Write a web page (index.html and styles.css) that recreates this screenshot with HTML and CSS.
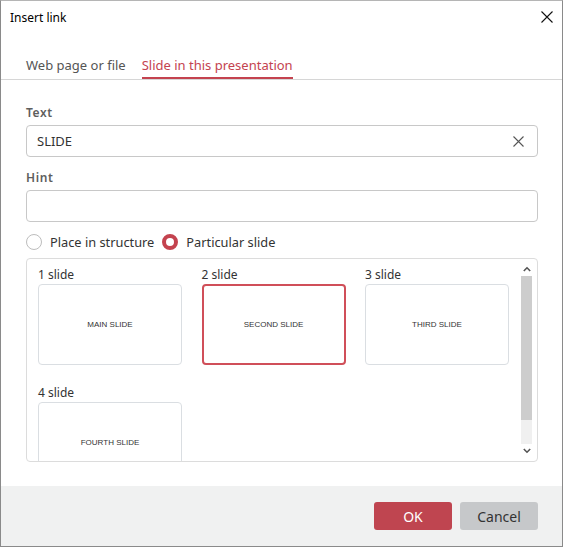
FILE: index.html
```html
<!DOCTYPE html>
<html>
<head>
<meta charset="utf-8">
<link rel="stylesheet" href="styles.css">
</head>
<body>
<div class="dialog">
  <div class="titlebar">
    <span class="title">Insert link</span>
    <button class="close" aria-label="Close">
      <svg width="12" height="12" viewBox="0 0 12 12"><path d="M0.5 0.5L11.5 11.5M11.5 0.5L0.5 11.5" stroke="#111" stroke-width="1.1" fill="none"/></svg>
    </button>
  </div>
  <div class="tabs">
    <div class="tab">Web page or file</div>
    <div class="tab active">Slide in this presentation</div>
  </div>
  <div class="content">
    <div class="label">Text</div>
    <div class="input">
      <span class="value">SLIDE</span>
      <svg class="clear" width="11" height="11" viewBox="0 0 11 11"><path d="M0.5 0.5L10.5 10.5M10.5 0.5L0.5 10.5" stroke="#555" stroke-width="1.1" fill="none"/></svg>
    </div>
    <div class="label hint">Hint</div>
    <div class="input"></div>
    <div class="radios">
      <label class="radio"><span class="dot"></span>Place in structure</label>
      <label class="radio checked"><span class="dot"></span>Particular slide</label>
    </div>
    <div class="listbox">
      <div class="grid">
        <div class="slide"><div class="slide-name">1 slide</div><div class="card">MAIN SLIDE</div></div>
        <div class="slide"><div class="slide-name">2 slide</div><div class="card selected">SECOND SLIDE</div></div>
        <div class="slide"><div class="slide-name">3 slide</div><div class="card">THIRD SLIDE</div></div>
        <div class="slide"><div class="slide-name">4 slide</div><div class="card">FOURTH SLIDE</div></div>
      </div>
      <div class="scrollbar">
        <div class="arrow up"><svg width="8" height="6" viewBox="0 0 8 6"><path d="M0.8 5L4 1.8L7.2 5" stroke="#555" stroke-width="1.6" fill="none"/></svg></div>
        <div class="track"><div class="thumb"></div></div>
        <div class="arrow down"><svg width="8" height="6" viewBox="0 0 8 6"><path d="M0.8 1L4 4.2L7.2 1" stroke="#555" stroke-width="1.6" fill="none"/></svg></div>
      </div>
    </div>
  </div>
  <div class="footer">
    <button class="btn ok">OK</button>
    <button class="btn cancel">Cancel</button>
  </div>
</div>
</body>
</html>
```
FILE: styles.css
```css
* { box-sizing: border-box; }
html, body { margin: 0; padding: 0; background: #fff; }
body { font-family: "Noto Sans", "Open Sans", sans-serif; color: #333; }

.dialog {
  width: 563px;
  height: 547px;
  border: 1px solid #8a8a8a;
  border-top-color: #b5b5b5;
  display: flex;
  flex-direction: column;
  background: #fff;
}

.titlebar {
  height: 32px;
  display: flex;
  align-items: center;
  justify-content: space-between;
  padding: 0 9px 0 9px;
}
.title { font-size: 12px; color: #000; }
.close {
  border: 0; background: none; padding: 0; width: 12px; height: 12px;
  display: flex;
}

.tabs {
  display: flex;
  gap: 16px;
  padding: 23px 0 0 25px;
  border-bottom: 1px solid #d6d6d6;
}
.tab {
  font-size: 13px;
  line-height: 18px;
  padding-bottom: 3px;
  border-bottom: 2px solid transparent;
  color: #555;
}
.tab.active { color: #c4434f; border-bottom-color: #c4434f; }

.content { padding: 25px 24px 0 25px; }

.label {
  font-size: 12px;
  font-weight: 600;
  line-height: 16px;
  color: #5e5e5e;
  letter-spacing: 0.6px;
  margin-bottom: 4px;
}
.label.hint { margin-top: 13px; }

.input {
  height: 32px;
  border: 1px solid #c8c8c8;
  border-radius: 4px;
  display: flex;
  align-items: center;
  justify-content: space-between;
  padding: 0 13px 0 10px;
}
.value { font-size: 13px; color: #333; }

.radios {
  display: flex;
  gap: 8px;
  margin-top: 10px;
  height: 20px;
  align-items: center;
}
.radio {
  display: flex;
  align-items: center;
  gap: 8px;
  font-size: 12.8px;
  color: #333;
}
.dot {
  width: 16px; height: 16px;
  border-radius: 50%;
  border: 1px solid #bdbdbd;
  background: #fff;
}
.radio.checked .dot { border: 4.5px solid #c4434f; }

.listbox {
  margin-top: 6px;
  height: 204px;
  border: 1px solid #dcdcdc;
  border-radius: 4px;
  overflow: hidden;
  position: relative;
}
.grid {
  display: grid;
  grid-template-columns: repeat(3, 144px);
  column-gap: 19.5px;
  row-gap: 20px;
  padding: 8px 0 0 11px;
}
.slide-name { font-size: 12px; line-height: 16px; color: #333; margin-bottom: 1px; }
.card {
  height: 81px;
  border: 1.5px solid #dadee2;
  border-radius: 4px;
  display: flex;
  align-items: center;
  justify-content: center;
  font-family: "Liberation Sans", Arial, sans-serif;
  font-size: 8px;
  color: #333;
}
.card.selected { border: 2px solid #d04f59; }

.scrollbar {
  position: absolute;
  right: 5px;
  top: 3px;
  bottom: 3px;
  width: 11px;
  display: flex;
  flex-direction: column;
}
.arrow { height: 14px; display: flex; align-items: center; justify-content: center; }
.track { flex: 1; background: #f0f0f0; }
.thumb { height: 144px; background: #cdcdcd; }

.footer {
  margin-top: auto;
  height: 60px;
  background: #f0f1f1;
  display: flex;
  justify-content: flex-end;
  align-items: center;
  gap: 8px;
  padding-right: 24px;
}
.btn {
  width: 78px;
  height: 28px;
  border: 0;
  border-radius: 3px;
  font-family: "Noto Sans", "Open Sans", sans-serif;
  font-size: 14px;
}
.btn.ok { background: #bf4550; color: #fff; }
.btn.cancel { background: #c6c8ca; color: #333; }
```
